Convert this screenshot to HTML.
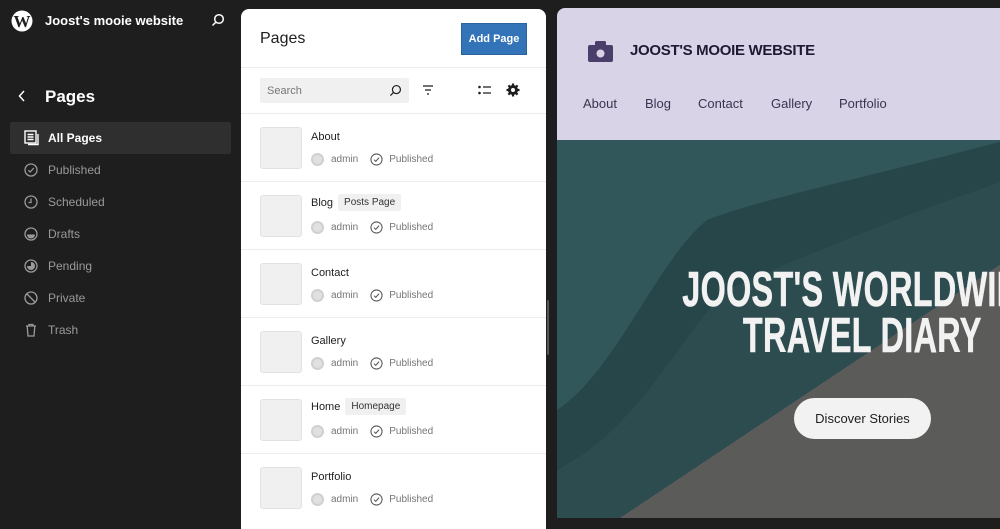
<!DOCTYPE html>
<html><head><meta charset="utf-8"><style>
*{box-sizing:border-box;margin:0;padding:0}
body{width:1000px;height:514px;overflow:hidden;background:#1e1e1e;font-family:"Liberation Sans",sans-serif;position:relative}
.side{position:absolute;left:0;top:0;width:240px;height:514px;color:#fff}
.nav{position:absolute;left:10px;width:221px;height:32px;font-size:12px;color:#9a9a9a;display:flex;align-items:center}
.nav svg{position:absolute;left:14px}
.nav span{position:absolute;left:38px}
.nav.on{background:#2f2f2f;color:#fff;font-weight:bold;border-radius:2px}
.panel{position:absolute;left:241px;top:9px;width:305px;height:520px;background:#fff;border-radius:8px 8px 0 0}
.row{position:absolute;left:0;width:305px;height:68px;border-top:1px solid #ececec}
.thumb{position:absolute;left:19px;top:13px;width:42px;height:42px;background:#f0f0f0;border:1px solid #e2e2e2;border-radius:3px}
.t{position:absolute;left:70px;top:17px;font-size:11px;color:#1e1e1e}
.tag{display:inline-block;background:#f0f0f0;font-size:10px;padding:3px 6px;margin-left:5px;border-radius:2px;color:#333;position:relative;top:-1px}
.meta{position:absolute;left:70px;top:39px;font-size:10px;color:#757575;display:flex;align-items:center}
.av{width:13px;height:13px;border-radius:50%;background:#e0e0e0;border:2px solid #d0d0d0;margin-right:7px}
.prev{position:absolute;left:557px;top:8px;width:450px;height:510px;border-radius:8px 0 0 0;overflow:hidden}
.hdr{position:absolute;left:0;top:0;width:450px;height:132px;background:#d9d3e8}
.menu{position:absolute;top:88px;font-size:13px;color:#3a3350}
</style></head><body>
<div class="side">
 <svg style="position:absolute;left:11px;top:10px" width="22" height="22" viewBox="0 0 22 22"><circle cx="11" cy="11" r="10.5" fill="#fff"/><text x="11" y="17" font-size="17" font-weight="bold" font-family="Liberation Serif" fill="#1e1e1e" text-anchor="middle">W</text></svg>
 <div style="position:absolute;left:45px;top:13px;font-size:13px;font-weight:bold">Joost's mooie website</div>
 <svg style="position:absolute;left:211px;top:13px" width="14" height="14" viewBox="0 0 14 14" fill="none" stroke="#fff" stroke-width="1.5"><circle cx="8" cy="6" r="4.3"/><path d="M5 9 1.5 12.5"/></svg>
 <svg style="position:absolute;left:18px;top:90px" width="8" height="12" viewBox="0 0 8 12" fill="none" stroke="#fff" stroke-width="1.5"><path d="M6 1 1.5 6 6 11"/></svg>
 <div style="position:absolute;left:45px;top:87px;font-size:17px;font-weight:bold">Pages</div>
 <div class="nav on" style="top:122px"><svg width="16" height="16" viewBox="0 0 16 16" fill="none" stroke="#fff" stroke-width="1.4"><rect x="1" y="1" width="11" height="12"/><path d="M3.5 4.5h6M3.5 7h6M3.5 9.5h6M14 4v10.5H4"/></svg><span>All Pages</span></div>
 <div class="nav" style="top:154px"><svg width="14" height="14" viewBox="0 0 14 14" fill="none" stroke="#9a9a9a" stroke-width="1.3"><circle cx="7" cy="7" r="6"/><path d="M4.3 7.2 6.2 9 9.8 5"/></svg><span>Published</span></div>
 <div class="nav" style="top:186px"><svg width="14" height="14" viewBox="0 0 14 14" fill="none" stroke="#9a9a9a" stroke-width="1.3"><circle cx="7" cy="7" r="6"/><path d="M7 3.5V7.5H4.5"/></svg><span>Scheduled</span></div>
 <div class="nav" style="top:218px"><svg width="14" height="14" viewBox="0 0 14 14"><circle cx="7" cy="7" r="6" fill="none" stroke="#9a9a9a" stroke-width="1.3"/><path d="M3 7.5h8a4 4 0 0 1-8 0z" fill="#9a9a9a"/></svg><span>Drafts</span></div>
 <div class="nav" style="top:250px"><svg width="14" height="14" viewBox="0 0 14 14"><circle cx="7" cy="7" r="6" fill="none" stroke="#9a9a9a" stroke-width="1.3"/><path d="M7 7V3a4 4 0 1 1-4 4z" fill="#9a9a9a"/></svg><span>Pending</span></div>
 <div class="nav" style="top:282px"><svg width="14" height="14" viewBox="0 0 14 14" fill="none" stroke="#9a9a9a" stroke-width="1.3"><circle cx="7" cy="7" r="6"/><path d="M3 3l8 8"/></svg><span>Private</span></div>
 <div class="nav" style="top:314px"><svg width="14" height="14" viewBox="0 0 14 14" fill="none" stroke="#9a9a9a" stroke-width="1.3"><path d="M2 3h10M5 3V1.5h4V3M3.2 3l.8 10h6l.8-10"/></svg><span>Trash</span></div>
</div>

<div class="panel">
 <div style="position:absolute;left:19px;top:21px;font-size:16px;color:#1e1e1e">Pages</div>
 <div style="position:absolute;left:220px;top:14px;width:66px;height:32px;background:#3373b7;border:1px solid #2a62a0;color:#fff;font-size:11px;font-weight:bold;display:flex;align-items:center;justify-content:center">Add Page</div>
 <div style="position:absolute;left:0;top:58px;width:305px;border-top:1px solid #ececec"></div>
 <div style="position:absolute;left:19px;top:69px;width:149px;height:25px;background:#f0f0f0;border-radius:2px"><span style="position:absolute;left:7px;top:7px;font-size:11px;color:#757575">Search</span>
  <svg style="position:absolute;left:129px;top:6px" width="13" height="13" viewBox="0 0 14 14" fill="none" stroke="#1e1e1e" stroke-width="1.3"><circle cx="8" cy="6" r="4.3"/><path d="M5 9 1.5 12.5"/></svg></div>
 <svg style="position:absolute;left:181px;top:76px" width="12" height="10" viewBox="0 0 12 10" stroke="#1e1e1e" stroke-width="1.2"><path d="M1 1h10M3 5h6M5 9h2"/></svg>
 <svg style="position:absolute;left:237px;top:76px" width="14" height="10" viewBox="0 0 14 10" stroke="#1e1e1e" stroke-width="1.3"><circle cx="1.5" cy="2" r="1.3" fill="#1e1e1e" stroke="none"/><circle cx="1.5" cy="8" r="1.3" fill="#1e1e1e" stroke="none"/><path d="M5 2h8M5 8h8"/></svg>
 <svg style="position:absolute;left:265px;top:74px" width="14" height="14" viewBox="0 0 14 14"><circle cx="7" cy="7" r="5" fill="#1e1e1e"/><g stroke="#1e1e1e" stroke-width="2.2"><path d="M7 0.5v13M0.5 7h13M2.4 2.4l9.2 9.2M11.6 2.4l-9.2 9.2"/></g><circle cx="7" cy="7" r="2" fill="#fff"/></svg>
 <div style="position:absolute;left:0;top:104px;width:305px;border-top:1px solid #ececec"></div>

 <div class="row" style="top:104px"><div class="thumb"></div><div class="t">About</div><div class="meta"><span class="av"></span>admin<svg style="margin:0 6px 0 12px" width="13" height="13" viewBox="0 0 14 14" fill="none" stroke="#555" stroke-width="1.1"><circle cx="7" cy="7" r="6"/><path d="M4.3 7.2 6.2 9 9.8 5"/></svg>Published</div></div>
 <div class="row" style="top:172px"><div class="thumb"></div><div class="t" style="top:13px">Blog<span class="tag">Posts Page</span></div><div class="meta"><span class="av"></span>admin<svg style="margin:0 6px 0 12px" width="13" height="13" viewBox="0 0 14 14" fill="none" stroke="#555" stroke-width="1.1"><circle cx="7" cy="7" r="6"/><path d="M4.3 7.2 6.2 9 9.8 5"/></svg>Published</div></div>
 <div class="row" style="top:240px"><div class="thumb"></div><div class="t">Contact</div><div class="meta"><span class="av"></span>admin<svg style="margin:0 6px 0 12px" width="13" height="13" viewBox="0 0 14 14" fill="none" stroke="#555" stroke-width="1.1"><circle cx="7" cy="7" r="6"/><path d="M4.3 7.2 6.2 9 9.8 5"/></svg>Published</div></div>
 <div class="row" style="top:308px"><div class="thumb"></div><div class="t">Gallery</div><div class="meta"><span class="av"></span>admin<svg style="margin:0 6px 0 12px" width="13" height="13" viewBox="0 0 14 14" fill="none" stroke="#555" stroke-width="1.1"><circle cx="7" cy="7" r="6"/><path d="M4.3 7.2 6.2 9 9.8 5"/></svg>Published</div></div>
 <div class="row" style="top:376px"><div class="thumb"></div><div class="t" style="top:13px">Home<span class="tag">Homepage</span></div><div class="meta"><span class="av"></span>admin<svg style="margin:0 6px 0 12px" width="13" height="13" viewBox="0 0 14 14" fill="none" stroke="#555" stroke-width="1.1"><circle cx="7" cy="7" r="6"/><path d="M4.3 7.2 6.2 9 9.8 5"/></svg>Published</div></div>
 <div class="row" style="top:444px"><div class="thumb"></div><div class="t">Portfolio</div><div class="meta"><span class="av"></span>admin<svg style="margin:0 6px 0 12px" width="13" height="13" viewBox="0 0 14 14" fill="none" stroke="#555" stroke-width="1.1"><circle cx="7" cy="7" r="6"/><path d="M4.3 7.2 6.2 9 9.8 5"/></svg>Published</div></div>
</div>
<div style="position:absolute;left:547px;top:300px;width:2px;height:55px;background:#555;border-radius:1px"></div>

<div class="prev">
 <svg style="position:absolute;left:0;top:132px" width="450" height="380" viewBox="0 0 450 380">
  <rect width="450" height="380" fill="#31575a"/>
  <path d="M0 270 C60 230 100 120 150 80 C200 60 300 40 450 0 L450 380 L0 380Z" fill="#27464a"/>
  <path d="M0 330 C80 290 120 200 170 150 C260 110 360 70 450 40 L450 380 L0 380Z" fill="#2d4c4f"/>
  <path d="M450 120 L450 380 L60 380 Z" fill="#5b5c59"/>
 </svg>
 <div class="hdr">
  <svg style="position:absolute;left:31px;top:33px" width="25" height="21" viewBox="0 0 25 21"><rect x="0" y="4" width="25" height="17" rx="2" fill="#4a3f6b"/><rect x="7" y="0" width="11" height="6" rx="1.5" fill="#4a3f6b"/><circle cx="12.5" cy="12.5" r="4" fill="#d9d3e8"/></svg>
  <div style="position:absolute;left:73px;top:34px;font-size:15px;font-weight:bold;color:#1e1a33;letter-spacing:-0.3px">JOOST'S MOOIE WEBSITE</div>
  <div class="menu" style="left:26px">About</div><div class="menu" style="left:88px">Blog</div><div class="menu" style="left:141px">Contact</div><div class="menu" style="left:214px">Gallery</div><div class="menu" style="left:282px">Portfolio</div>
 </div>
 <div style="position:absolute;left:-143px;top:259px;width:900px;text-align:center;color:#f2f2f2;font-weight:bold;font-size:49px;line-height:46px;transform:scaleX(0.66);transform-origin:445px 0;letter-spacing:0.5px;-webkit-text-stroke:0.6px #f2f2f2">JOOST'S WORLDWIDE<br>TRAVEL DIARY</div>
 <div style="position:absolute;left:237px;top:390px;width:137px;height:41px;background:#f2f2f2;border-radius:21px;font-size:13px;color:#1e1e1e;display:flex;align-items:center;justify-content:center">Discover Stories</div>
</div>
</body></html>
